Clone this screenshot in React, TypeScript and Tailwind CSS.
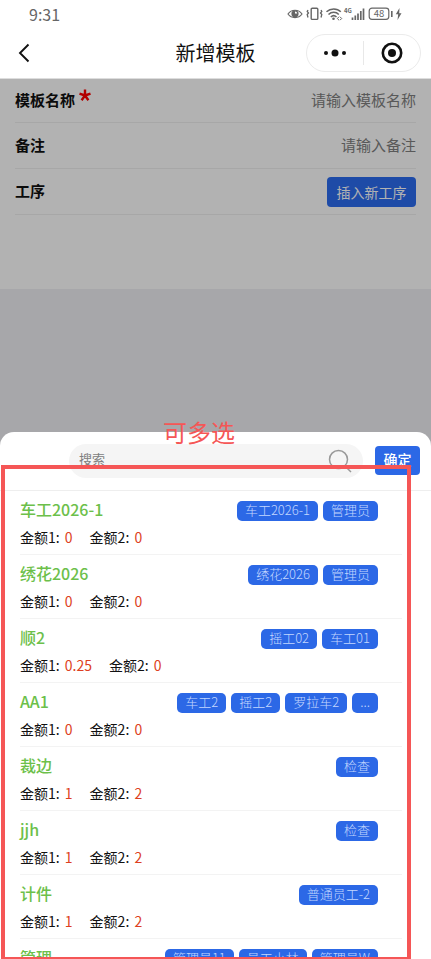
type Process = {
  name: string;
  price1: string;
  price2: string;
  tags: string[];
};

const PROCESSES: Process[] = [
  { name: "车工2026-1", price1: "0", price2: "0", tags: ["车工2026-1", "管理员"] },
  { name: "绣花2026", price1: "0", price2: "0", tags: ["绣花2026", "管理员"] },
  { name: "顺2", price1: "0.25", price2: "0", tags: ["摇工02", "车工01"] },
  { name: "AA1", price1: "0", price2: "0", tags: ["车工2", "摇工2", "罗拉车2", "..."] },
  { name: "裁边", price1: "1", price2: "2", tags: ["检查"] },
  { name: "jjh", price1: "1", price2: "2", tags: ["检查"] },
  { name: "计件", price1: "1", price2: "2", tags: ["普通员工-2"] },
  { name: "管理", price1: "1", price2: "2", tags: ["管理员11", "员工小林", "管理员W"] },
];

function StatusIcons() {
  return (
    <svg width="116" height="16" viewBox="0 0 116 16" fill="none" stroke="#666" aria-hidden="true">
      {/* eye */}
      <path d="M1 8C4.5 3 11.5 3 15 8C11.5 12.800 4.500 12.800 1 8Z" strokeWidth="1.2" />
      <circle cx="8" cy="7.800" r="3.600" fill="#666" stroke="none" />
      <path d="M8 7.500V5.500A2.200 2.200 0 0 1 10.200 7.500Z" fill="#fff" stroke="none" />
      {/* vibrate */}
      <rect x="24.200" y="2.200" width="6.600" height="11.200" rx="1" strokeWidth="1.400" />
      <path d="M21 4l-.8 1.500 1.300 1.500-1.300 1.500L21 11.500M34 4l.8 1.500L33.500 7l1.300 1.500-.8 3" strokeWidth="1.300" />
      {/* wifi */}
      <path d="M39.500 5.800C43.500 2 50 2 53.800 5.800M41.500 8.500C44.500 5.600 49 5.600 51.800 8.500M43.800 11C45.500 9.400 47.800 9.400 49.500 11" strokeWidth="1.500" />
      <circle cx="46.500" cy="12.800" r="1.300" fill="#666" stroke="none" />
      <path d="M52 10.800L50.300 12.500L52 14.200M53 10.800L54.700 12.500L53 14.200" strokeWidth="1" />
      <text x="57" y="7" fontSize="6" fontWeight="700" fill="#666" stroke="none">4G</text>
      {/* signal */}
      <path d="M65.500 14v-2.500M68.300 14V9.500M71 14V7.500M73.800 14V5M76.500 14V2.500" strokeWidth="1.700" />
      {/* battery */}
      <rect x="82.200" y="2.200" width="19.600" height="11.200" rx="2.800" strokeWidth="1.200" />
      <text x="92" y="11.300" fontSize="9.500" textAnchor="middle" fill="#666" stroke="none">48</text>
      <path d="M104.800 5v6" strokeWidth="1.600" />
      <path d="M112.500 2l-3.700 6.300h2.400L110.500 14l4-6.700h-2.300z" fill="#666" stroke="none" />
    </svg>
  );
}

function Price({ label, value }: { label: string; value: string }) {
  return (
    <span>
      {label}: <span className="ml-[2px] text-[#dd3f22]">{value}</span>
    </span>
  );
}

function ProcessRow({ process }: { process: Process }) {
  return (
    <li className="h-16 shrink-0 border-b border-[#f3f3f3] pt-[6px]">
      <div className="flex h-6 items-start justify-between pr-6">
        <h2 className="text-base leading-6 font-medium text-[#6cc04a]">{process.name}</h2>
        <div className="flex gap-[5px] pt-1">
          {process.tags.map((tag) => (
            <span
              key={tag}
              className="h-5 rounded-[5px] bg-[#2c68e6] px-2 text-[13px] leading-[18px] font-light text-[#c3d7ff]"
            >
              {tag}
            </span>
          ))}
        </div>
      </div>
      <div className="flex gap-[17px] pt-1 text-sm leading-6 text-[#111]">
        <Price label="金额1" value={process.price1} />
        <Price label="金额2" value={process.price2} />
      </div>
    </li>
  );
}

export default function App() {
  return (
    <div className="flex h-screen flex-col overflow-hidden bg-white font-['Noto_Sans_CJK_SC',sans-serif]">
      <div className="flex h-7 shrink-0 items-center justify-between pr-7 pl-[29px]">
        <span className="text-base leading-6 text-[#666]">9:31</span>
        <StatusIcons />
      </div>

      <header className="grid h-[51px] shrink-0 grid-cols-[1fr_auto_1fr] items-center border-b border-[#ddd] pr-[10px] pl-[10px]">
        <button type="button" aria-label="返回" className="flex w-7 justify-center">
          <svg width="12" height="20" viewBox="0 0 12 20" fill="none" stroke="#111" strokeWidth="1.900">
            <path d="M10.500 1.500L2 10L10.500 18.500" />
          </svg>
        </button>
        <h1 className="text-xl text-[#111]">新增模板</h1>
        <div className="flex h-[38px] w-[115px] items-center justify-self-end rounded-full border border-[#ebebeb]">
          <button type="button" aria-label="更多" className="flex flex-1 justify-center">
            <svg width="24" height="8" viewBox="0 0 24 8" fill="#111">
              <circle cx="3" cy="4" r="2" />
              <circle cx="12" cy="4" r="3.500" />
              <circle cx="21" cy="4" r="2" />
            </svg>
          </button>
          <div className="h-6 w-px bg-[#e8e8e8]" />
          <button type="button" aria-label="关闭" className="flex flex-1 justify-center">
            <svg width="22" height="22" viewBox="0 0 22 22">
              <circle cx="11" cy="11" r="9.200" fill="none" stroke="#111" strokeWidth="2.600" />
              <circle cx="11" cy="11" r="4" fill="#111" />
            </svg>
          </button>
        </div>
      </header>

      <main className="relative min-h-0 flex-1 bg-[#eff0f4]">
        <form className="h-[210px] bg-white px-[15px] text-[#111]">
          <div className="flex h-11 items-center justify-between border-b border-[#f0f0f0]">
            <label htmlFor="name" className="flex text-[15px] font-bold">
              模板名称
              <svg width="12" height="12" viewBox="0 0 12 12" className="ml-1" role="img" aria-label="必填">
                <path
                  d="M6 6.500V.5M6 6.500L.5 4.600M6 6.500L11.500 4.600M6 6.500L2.600 11.200M6 6.500L9.400 11.200"
                  stroke="#f00"
                  strokeWidth="2.400"
                />
              </svg>
            </label>
            <input
              id="name"
              placeholder="请输入模板名称"
              className="w-48 text-right text-[15px] outline-none placeholder:text-[#808080]"
            />
          </div>
          <div className="flex h-[46px] items-center justify-between border-b border-[#f0f0f0]">
            <label htmlFor="remark" className="text-[15px] font-bold">
              备注
            </label>
            <input
              id="remark"
              placeholder="请输入备注"
              className="w-48 text-right text-[15px] outline-none placeholder:text-[#808080]"
            />
          </div>
          <div className="flex h-[46px] items-center justify-between border-b border-[#f0f0f0]">
            <span className="text-[15px] font-bold">工序</span>
            <button type="button" className="h-[30px] w-[89px] rounded-sm bg-[#2b6cf0] text-sm text-white">
              插入新工序
            </button>
          </div>
        </form>

        <div className="absolute inset-0 bg-black/30" />

        <section className="absolute inset-x-0 bottom-0 flex h-[55vh] flex-col overflow-hidden rounded-t-[14px] bg-white">
          <div className="flex h-[59px] shrink-0 items-center gap-3 border-b border-[#eee] pr-[11px] pl-[69px]">
            <label className="flex h-[34px] min-w-0 flex-1 items-center rounded-full bg-[#f5f5f5] pr-[10px] pl-[10px]">
              <input
                aria-label="搜索"
                placeholder="搜索"
                className="min-w-0 flex-1 pb-1 text-[13px] outline-none placeholder:text-[#808080]"
              />
              <svg width="26" height="26" viewBox="0 0 26 26" fill="none" stroke="#999" strokeWidth="1.500">
                <circle cx="11.500" cy="11.500" r="9" />
                <path d="M18 18L24 24" />
              </svg>
            </label>
            <button
              type="button"
              className="h-[29px] w-[45px] rounded-sm bg-[#2c68e6] pb-1 text-sm font-medium text-white"
            >
              确定
            </button>
          </div>
          <ul className="flex min-h-0 flex-1 flex-col overflow-hidden pr-[29px] pl-5">
            {PROCESSES.map((process) => (
              <ProcessRow key={process.name} process={process} />
            ))}
          </ul>
        </section>

        {/* Hint frame drawn over the list */}
        <div className="pointer-events-none absolute inset-x-0 bottom-0 h-[55vh]">
          <p className="absolute -top-4 left-[163px] text-2xl leading-8 text-[#f55656]">可多选</p>
          <div className="absolute top-[33px] right-5 bottom-0 left-[1px] border-4 border-b-2 border-[#f55656]" />
        </div>
      </main>
    </div>
  );
}
